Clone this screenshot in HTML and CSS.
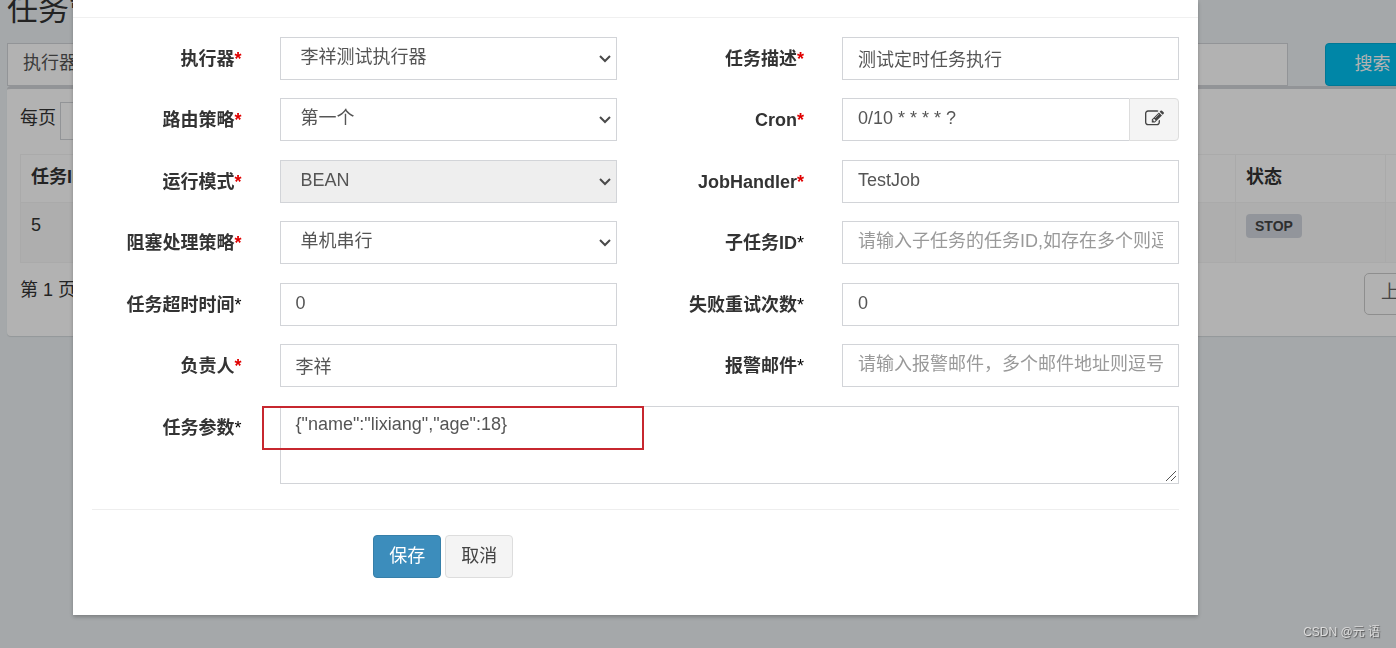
FILE: index.html
```html
<!DOCTYPE html>
<html lang="zh-CN">
<head>
<meta charset="utf-8">
<title>任务管理</title>
<link rel="stylesheet" href="styles.css">
</head>
<body>
<svg class="symbols" aria-hidden="true">
  <symbol id="chevron" viewBox="0 0 12 8"><path d="M1 1l5 5 5-5" fill="none" stroke="#4a4a4a" stroke-width="2"/></symbol>
</svg>
<main class="page">
  <h1 class="page-title">任务管理</h1>
  <form class="filters">
    <label class="filter">
      <span class="filter-label">执行器</span>
      <input class="filter-input" type="text">
    </label>
    <button class="search-btn" type="button">搜索</button>
  </form>
  <section class="box">
    <label class="page-size"><span class="page-size-label">每页</span><input class="page-size-input" type="text"></label>
    <table class="jobs">
      <thead>
        <tr><th class="col-id">任务ID</th><th class="col-state">状态</th><th class="col-more"></th></tr>
      </thead>
      <tbody>
        <tr><td>5</td><td><span class="badge">STOP</span></td><td></td></tr>
      </tbody>
    </table>
    <div class="pager">
      <span>第 1 页</span>
      <button class="pager-btn" type="button">上页</button>
    </div>
  </section>
</main>

<div class="backdrop">
  <div class="modal" role="dialog" aria-modal="true">
    <div class="modal-header"></div>
    <form class="modal-form">
      <div class="row">
        <label class="label" for="group">执行器<span class="required">*</span></label>
        <div class="cell"><select class="control select" id="group"><option>李祥测试执行器</option></select><svg class="chevron"><use href="#chevron"/></svg></div>
        <label class="label" for="desc">任务描述<span class="required">*</span></label>
        <div class="cell"><input class="control" id="desc" type="text" value="测试定时任务执行"></div>
      </div>
      <div class="row">
        <label class="label" for="route">路由策略<span class="required">*</span></label>
        <div class="cell"><select class="control select" id="route"><option>第一个</option></select><svg class="chevron"><use href="#chevron"/></svg></div>
        <label class="label" for="cron">Cron<span class="required">*</span></label>
        <div class="cell input-group">
          <input class="control" id="cron" type="text" value="0/10 * * * * ?">
          <button class="edit-btn" type="button" aria-label="编辑">
            <svg class="edit-icon" viewBox="0 0 1792 1792" aria-hidden="true"><path d="M888 1184l116-116-152-152-116 116v56h96v96h56zm440-720q-16-16-33 1l-350 350q-17 17-1 33t33-1l350-350q17-17 1-33zm80 594v190q0 119-84.500 203.500t-203.500 84.500h-832q-119 0-203.500-84.500t-84.500-203.500v-832q0-119 84.500-203.500t203.500-84.500h832q63 0 117 25 15 7 18 23 3 17-9 29l-49 49q-14 14-32 8-23-6-45-6h-832q-66 0-113 47t-47 113v832q0 66 47 113t113 47h832q66 0 113-47t47-113v-126q0-13 9-22l64-64q15-15 35-7t20 29zm-96-738l288 288-672 672h-288v-288zm444 132l-92 92-288-288 92-92q28-28 68-28t68 28l152 152q28 28 28 68t-28 68z"/></svg>
          </button>
        </div>
      </div>
      <div class="row">
        <label class="label" for="mode">运行模式<span class="required">*</span></label>
        <div class="cell"><select class="control select" id="mode" disabled><option>BEAN</option></select><svg class="chevron"><use href="#chevron"/></svg></div>
        <label class="label" for="handler">JobHandler<span class="required">*</span></label>
        <div class="cell"><input class="control" id="handler" type="text" value="TestJob"></div>
      </div>
      <div class="row">
        <label class="label" for="block">阻塞处理策略<span class="required">*</span></label>
        <div class="cell"><select class="control select" id="block"><option>单机串行</option></select><svg class="chevron"><use href="#chevron"/></svg></div>
        <label class="label" for="child">子任务ID<span class="optional">*</span></label>
        <div class="cell"><input class="control" id="child" type="text" placeholder="请输入子任务的任务ID,如存在多个则逗号分隔"></div>
      </div>
      <div class="row">
        <label class="label" for="timeout">任务超时时间<span class="optional">*</span></label>
        <div class="cell"><input class="control" id="timeout" type="text" value="0"></div>
        <label class="label" for="retry">失败重试次数<span class="optional">*</span></label>
        <div class="cell"><input class="control" id="retry" type="text" value="0"></div>
      </div>
      <div class="row">
        <label class="label" for="owner">负责人<span class="required">*</span></label>
        <div class="cell"><input class="control" id="owner" type="text" value="李祥"></div>
        <label class="label" for="mail">报警邮件<span class="optional">*</span></label>
        <div class="cell"><input class="control" id="mail" type="text" placeholder="请输入报警邮件，多个邮件地址则逗号分隔"></div>
      </div>
      <div class="row">
        <label class="label" for="param">任务参数<span class="optional">*</span></label>
        <div class="cell cell-wide">
          <textarea class="control textarea" id="param">{"name":"lixiang","age":18}</textarea>
          <svg class="grip" viewBox="0 0 12 12" aria-hidden="true"><path d="M1 11L11 1M6 11l5-5" stroke="#555"/></svg>
          <span class="highlight"></span>
        </div>
      </div>
      <hr class="divider">
      <div class="actions">
        <button class="btn btn-primary" type="button">保存</button>
        <button class="btn" type="button">取消</button>
      </div>
    </form>
  </div>
</div>
<div class="watermark">CSDN @元 语</div>
</body>
</html>
```
FILE: styles.css
```css
* {
  box-sizing: border-box;
}

body {
  margin: 0;
  min-height: 100vh;
  overflow: hidden;
  background: #ecf1f4;
  color: #333;
  font: 18px/25px "Liberation Sans", "Noto Sans CJK SC", sans-serif;
}

button,
input,
select,
textarea {
  font: inherit;
  color: inherit;
}

.symbols {
  display: none;
}

/* Job list behind the dialog */
.page {
  margin-right: -24px;
  padding-left: 7px;
}

.page-title {
  height: 43px;
  margin: 0;
  font-size: 31px;
  font-weight: 400;
  line-height: 20px;
}

.filters {
  display: flex;
  gap: 37px;
}

.filter {
  display: flex;
  flex: 1;
  height: 43px;
  border: 1px solid #d2d4d8;
  background: #fff;
}

.filter-label {
  padding: 7px 15px;
  color: #555;
}

.filter-input {
  flex: 1;
  border: 0;
  border-left: 1px solid #d2d4d8;
  background: #fff;
}

.search-btn {
  width: 95px;
  border: 1px solid #00acd6;
  border-radius: 4px;
  background: #00c0ef;
  color: #fff;
}

.box {
  height: 250px;
  padding: 13px;
  border-top: 3px solid #d2d4d8;
  border-radius: 4px;
  background: #fff;
  box-shadow: 0 1px 1px rgba(0, 0, 0, 0.1);
}

.page-size {
  display: flex;
  gap: 4px;
  height: 38px;
}

.page-size-label {
  padding-top: 4px;
}

.page-size-input {
  width: 90px;
  height: 38px;
  border: 1px solid #d2d4d8;
}

.jobs {
  width: 100%;
  margin-top: 14px;
  border-collapse: collapse;
  table-layout: fixed;
}

.jobs th,
.jobs td {
  padding: 10px;
  border: 1px solid #f4f4f4;
  text-align: left;
  vertical-align: top;
}

.jobs th {
  height: 48px;
}

.jobs td {
  height: 60px;
  background: #f9f9f9;
}

.col-state {
  width: 150px;
}

.col-more {
  width: 20px;
}

.badge {
  display: inline-block;
  padding: 0 9px;
  border-radius: 4px;
  background: #d2d6de;
  color: #444;
  font-size: 14px;
  font-weight: 700;
  line-height: 24px;
}

.pager {
  display: flex;
  align-items: flex-start;
  justify-content: space-between;
  margin-right: -21px;
  padding-top: 10px;
}

.pager span {
  padding-top: 5px;
}

.pager-btn {
  width: 64px;
  height: 42px;
  padding: 0 0 4px 16px;
  border: 1px solid #ccc;
  border-radius: 5px;
  background: #fff;
  color: #666;
  text-align: left;
}

/* Dialog */
.backdrop {
  position: fixed;
  inset: 0;
  overflow: hidden;
  background: rgba(0, 0, 0, 0.3);
}

.modal {
  margin: 0 198px 0 73px;
  background: #fff;
  box-shadow: 0 2px 4px rgba(0, 0, 0, 0.25);
}

.modal-header {
  height: 18px;
  border-bottom: 1px solid #f0f0f0;
}

.modal-form {
  padding: 19px 0 37px;
}

.row {
  display: grid;
  grid-template-columns: 2fr 4fr 2fr 4fr;
  margin-bottom: 18px;
}

.row:nth-child(even) {
  margin-bottom: 19px;
}

.label {
  padding: 10px 19px 8px;
  font-weight: 700;
  text-align: right;
  white-space: nowrap;
}

.required {
  color: #e00000;
}

.optional {
  color: #000;
  font-weight: 400;
}

.cell {
  position: relative;
  display: flex;
  min-width: 0;
  padding: 0 19px;
}

.cell-wide {
  grid-column: 2 / -1;
}

.control {
  flex: 1;
  min-width: 0;
  height: 43px;
  padding: 6px 15px 8px;
  border: 1px solid #d2d4d8;
  border-radius: 0;
  outline: 0;
  background: #fff;
  color: #555;
  line-height: 27px;
}

.control::placeholder {
  color: #999;
}

.select {
  padding-left: 20px;
  appearance: none;
}

.select:disabled {
  background: #eee;
  opacity: 1;
}

.chevron {
  position: absolute;
  top: 18px;
  right: 25px;
  width: 12px;
  height: 8px;
  pointer-events: none;
}

.textarea {
  height: 78px;
  padding-top: 5px;
  line-height: 25px;
  resize: none;
}

.grip {
  position: absolute;
  right: 21px;
  bottom: 2px;
  width: 12px;
  height: 12px;
  pointer-events: none;
}

.highlight {
  position: absolute;
  top: 0;
  left: 1px;
  width: 382px;
  height: 44px;
  border: 2px solid #c7272f;
  pointer-events: none;
}

.input-group .control {
  border-right: 0;
}

.edit-btn {
  display: flex;
  align-items: center;
  justify-content: center;
  width: 50px;
  height: 43px;
  padding: 0 0 2px;
  border: 1px solid #ddd;
  border-radius: 0 4px 4px 0;
  background: #f4f4f4;
  color: #444;
}

.edit-icon {
  width: 19px;
  height: 19px;
  fill: currentColor;
}

.divider {
  height: 1px;
  margin: 25px 19px;
  border: 0;
  background: #eee;
}

.actions {
  display: flex;
  gap: 4px;
  margin-left: 25%;
  padding-left: 19px;
}

.btn {
  width: 68px;
  height: 43px;
  padding: 0;
  border: 1px solid #ddd;
  border-radius: 4px;
  background: #f4f4f4;
  color: #444;
}

.btn-primary {
  border-color: #367fa9;
  background: #3c8dbc;
  color: #fff;
}

.watermark {
  position: fixed;
  right: 16px;
  bottom: 6px;
  color: #dcdcdc;
  font-size: 12px;
  line-height: 20px;
  text-shadow: 1px 1px 1px #555;
}
```
